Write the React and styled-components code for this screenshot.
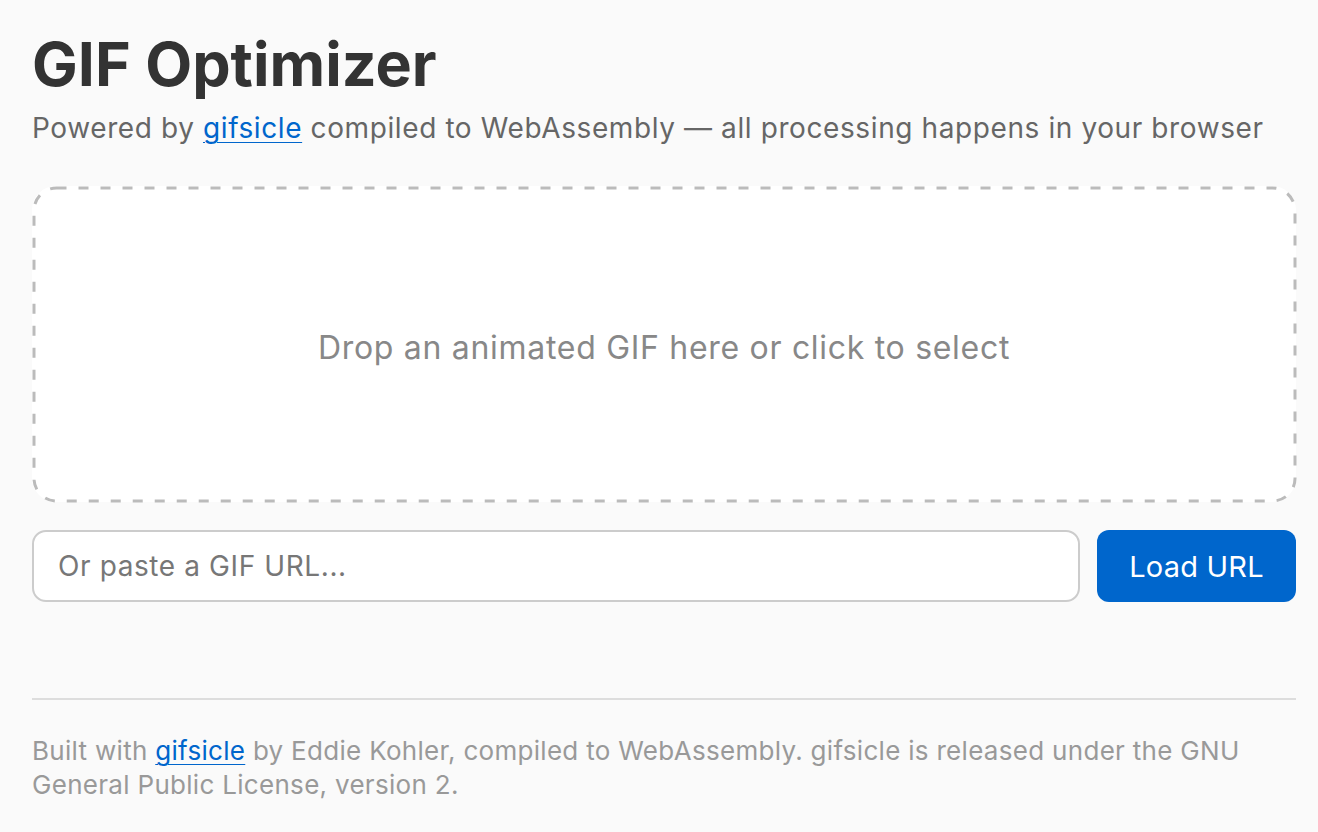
import React from "react"
import styled, { createGlobalStyle } from "styled-components"

const GlobalStyle = createGlobalStyle`
  html, body {
    margin: 0;
    padding: 0;
    background: #fafafa;
  }
  body {
    font-family: Inter, "Liberation Sans", sans-serif;
    color: #333;
  }
`

const Page = styled.main`
  padding: 26px 22px 32px 32px;
  max-width: 1264px;
`

const Title = styled.h1`
  margin: 0;
  font-size: 61px;
  font-weight: 700;
  line-height: 76px;
  color: #333;
`

const Subtitle = styled.p`
  margin: 8px 0 40px;
  font-size: 28px;
  line-height: 36px;
  letter-spacing: 0.6px;
  color: #666;
`

const Link = styled.a`
  color: #0066cc;
  text-decoration: underline;
  text-underline-offset: 4px;
  text-decoration-thickness: 1px;
`

// dashed outline drawn as svg so the dash length matches the reference
const DropZone = styled.div`
  position: relative;
  box-sizing: border-box;
  height: 316px;
  padding-top: 6px;
  border-radius: 24px;
  background: #fff;
  display: flex;
  align-items: center;
  justify-content: center;
  font-size: 32px;
  letter-spacing: 0.7px;
  color: #888;
  cursor: pointer;
`

const DashedOutline = styled.svg`
  position: absolute;
  top: 1.5px;
  left: 1.5px;
  width: calc(100% - 3px);
  height: calc(100% - 3px);
  overflow: visible;
  pointer-events: none;

  rect {
    fill: none;
    stroke: #bbb;
    stroke-width: 3px;
    stroke-dasharray: 10 12;
  }
`

const UrlRow = styled.div`
  display: flex;
  gap: 17px;
  margin-top: 28px;
`

const UrlInput = styled.input`
  flex: 1;
  box-sizing: border-box;
  height: 72px;
  padding: 0 24px;
  border: 2px solid #ccc;
  border-radius: 14px;
  background: #fff;
  font-family: Inter, "Liberation Sans", sans-serif;
  font-size: 28px;
  letter-spacing: 0.6px;
  color: #333;
  outline: none;

  &::placeholder {
    color: #777;
  }
`

const LoadButton = styled.button`
  box-sizing: border-box;
  width: 199px;
  height: 72px;
  border: 0;
  border-radius: 12px;
  background: #0066cc;
  color: #fff;
  font-family: Inter, "Liberation Sans", sans-serif;
  font-size: 29px;
  letter-spacing: 0.2px;
  cursor: pointer;
`

const Divider = styled.hr`
  margin: 96px 0 0;
  border: 0;
  border-top: 2px solid #ddd;
`

const Footer = styled.footer`
  margin-top: 34px;
  font-size: 26px;
  line-height: 34px;
  letter-spacing: 0.3px;
  color: #999;
`

export default function App() {
  return (
    <>
      <GlobalStyle />
      <Page>
        <Title>GIF Optimizer</Title>
        <Subtitle>
          Powered by <Link href="#">gifsicle</Link> compiled to WebAssembly — all
          processing happens in your browser
        </Subtitle>
        <DropZone>
          <DashedOutline>
            <rect width="100%" height="100%" rx="22.5" ry="22.5" />
          </DashedOutline>
          Drop an animated GIF here or click to select
        </DropZone>
        <UrlRow>
          <UrlInput type="text" placeholder="Or paste a GIF URL..." />
          <LoadButton>Load URL</LoadButton>
        </UrlRow>
        <Divider />
        <Footer>
          Built with <Link href="#">gifsicle</Link> by Eddie Kohler, compiled to
          WebAssembly. gifsicle is released under the GNU General Public License,
          version 2.
        </Footer>
      </Page>
    </>
  )
}
